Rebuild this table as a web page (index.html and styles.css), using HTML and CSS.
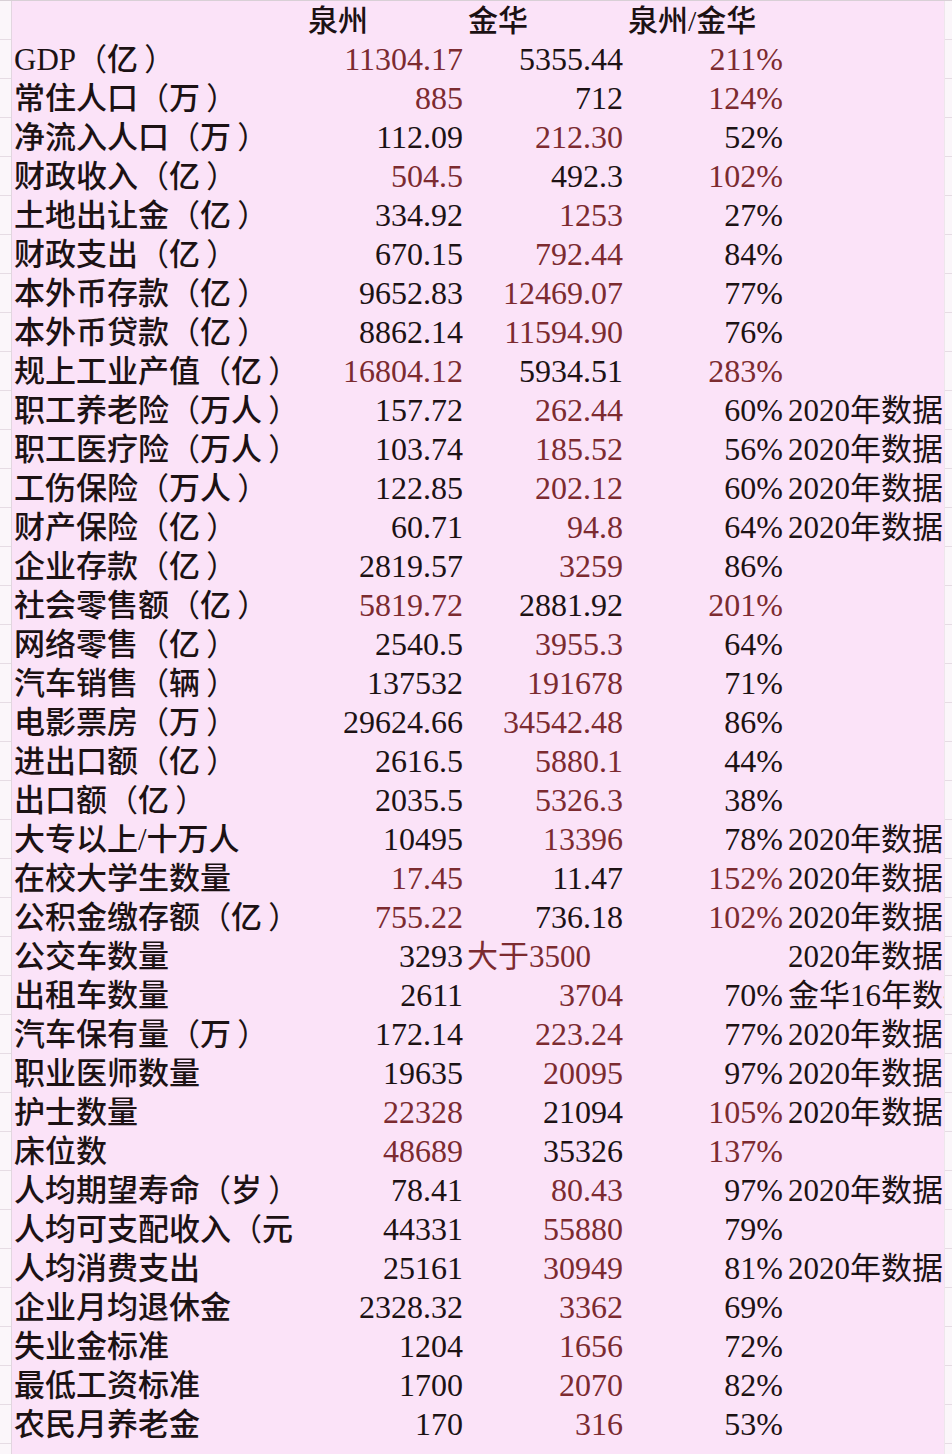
FILE: index.html
```html
<!DOCTYPE html>
<html lang="zh-CN">
<head>
<meta charset="utf-8">
<title>泉州 金华 对比</title>
<link rel="stylesheet" href="styles.css">
</head>
<body>
<div class="page">
  <div class="gutter"></div>
  <div class="sheet">
    <div class="row head"><div class="c a"></div><div class="c t">泉州</div><div class="c t">金华</div><div class="c t">泉州/金华</div><div class="c e"></div></div>
    <div class="row"><div class="c a">GDP<span class="po">（</span>亿<span class="pc">）</span></div><div class="c n r">11304.17</div><div class="c n">5355.44</div><div class="c n r">211%</div><div class="c e"></div></div>
    <div class="row"><div class="c a">常住人口<span class="po">（</span>万<span class="pc">）</span></div><div class="c n r">885</div><div class="c n">712</div><div class="c n r">124%</div><div class="c e"></div></div>
    <div class="row"><div class="c a">净流入人口<span class="po">（</span>万<span class="pc">）</span></div><div class="c n">112.09</div><div class="c n r">212.30</div><div class="c n">52%</div><div class="c e"></div></div>
    <div class="row"><div class="c a">财政收入<span class="po">（</span>亿<span class="pc">）</span></div><div class="c n r">504.5</div><div class="c n">492.3</div><div class="c n r">102%</div><div class="c e"></div></div>
    <div class="row"><div class="c a">土地出让金<span class="po">（</span>亿<span class="pc">）</span></div><div class="c n">334.92</div><div class="c n r">1253</div><div class="c n">27%</div><div class="c e"></div></div>
    <div class="row"><div class="c a">财政支出<span class="po">（</span>亿<span class="pc">）</span></div><div class="c n">670.15</div><div class="c n r">792.44</div><div class="c n">84%</div><div class="c e"></div></div>
    <div class="row"><div class="c a">本外币存款<span class="po">（</span>亿<span class="pc">）</span></div><div class="c n">9652.83</div><div class="c n r">12469.07</div><div class="c n">77%</div><div class="c e"></div></div>
    <div class="row"><div class="c a">本外币贷款<span class="po">（</span>亿<span class="pc">）</span></div><div class="c n">8862.14</div><div class="c n r">11594.90</div><div class="c n">76%</div><div class="c e"></div></div>
    <div class="row"><div class="c a">规上工业产值<span class="po">（</span>亿<span class="pc">）</span></div><div class="c n r">16804.12</div><div class="c n">5934.51</div><div class="c n r">283%</div><div class="c e"></div></div>
    <div class="row"><div class="c a">职工养老险<span class="po">（</span>万人<span class="pc">）</span></div><div class="c n">157.72</div><div class="c n r">262.44</div><div class="c n">60%</div><div class="c e">2020年数据</div></div>
    <div class="row"><div class="c a">职工医疗险<span class="po">（</span>万人<span class="pc">）</span></div><div class="c n">103.74</div><div class="c n r">185.52</div><div class="c n">56%</div><div class="c e">2020年数据</div></div>
    <div class="row"><div class="c a">工伤保险<span class="po">（</span>万人<span class="pc">）</span></div><div class="c n">122.85</div><div class="c n r">202.12</div><div class="c n">60%</div><div class="c e">2020年数据</div></div>
    <div class="row"><div class="c a">财产保险<span class="po">（</span>亿<span class="pc">）</span></div><div class="c n">60.71</div><div class="c n r">94.8</div><div class="c n">64%</div><div class="c e">2020年数据</div></div>
    <div class="row"><div class="c a">企业存款<span class="po">（</span>亿<span class="pc">）</span></div><div class="c n">2819.57</div><div class="c n r">3259</div><div class="c n">86%</div><div class="c e"></div></div>
    <div class="row"><div class="c a">社会零售额<span class="po">（</span>亿<span class="pc">）</span></div><div class="c n r">5819.72</div><div class="c n">2881.92</div><div class="c n r">201%</div><div class="c e"></div></div>
    <div class="row"><div class="c a">网络零售<span class="po">（</span>亿<span class="pc">）</span></div><div class="c n">2540.5</div><div class="c n r">3955.3</div><div class="c n">64%</div><div class="c e"></div></div>
    <div class="row"><div class="c a">汽车销售<span class="po">（</span>辆<span class="pc">）</span></div><div class="c n">137532</div><div class="c n r">191678</div><div class="c n">71%</div><div class="c e"></div></div>
    <div class="row"><div class="c a">电影票房<span class="po">（</span>万<span class="pc">）</span></div><div class="c n">29624.66</div><div class="c n r">34542.48</div><div class="c n">86%</div><div class="c e"></div></div>
    <div class="row"><div class="c a">进出口额<span class="po">（</span>亿<span class="pc">）</span></div><div class="c n">2616.5</div><div class="c n r">5880.1</div><div class="c n">44%</div><div class="c e"></div></div>
    <div class="row"><div class="c a">出口额<span class="po">（</span>亿<span class="pc">）</span></div><div class="c n">2035.5</div><div class="c n r">5326.3</div><div class="c n">38%</div><div class="c e"></div></div>
    <div class="row"><div class="c a">大专以上/十万人</div><div class="c n">10495</div><div class="c n r">13396</div><div class="c n">78%</div><div class="c e">2020年数据</div></div>
    <div class="row"><div class="c a">在校大学生数量</div><div class="c n r">17.45</div><div class="c n">11.47</div><div class="c n r">152%</div><div class="c e">2020年数据</div></div>
    <div class="row"><div class="c a">公积金缴存额<span class="po">（</span>亿<span class="pc">）</span></div><div class="c n r">755.22</div><div class="c n">736.18</div><div class="c n r">102%</div><div class="c e">2020年数据</div></div>
    <div class="row"><div class="c a">公交车数量</div><div class="c n">3293</div><div class="c tx r">大于3500</div><div class="c n"></div><div class="c e">2020年数据</div></div>
    <div class="row"><div class="c a">出租车数量</div><div class="c n">2611</div><div class="c n r">3704</div><div class="c n">70%</div><div class="c e">金华16年数据</div></div>
    <div class="row"><div class="c a">汽车保有量<span class="po">（</span>万<span class="pc">）</span></div><div class="c n">172.14</div><div class="c n r">223.24</div><div class="c n">77%</div><div class="c e">2020年数据</div></div>
    <div class="row"><div class="c a">职业医师数量</div><div class="c n">19635</div><div class="c n r">20095</div><div class="c n">97%</div><div class="c e">2020年数据</div></div>
    <div class="row"><div class="c a">护士数量</div><div class="c n r">22328</div><div class="c n">21094</div><div class="c n r">105%</div><div class="c e">2020年数据</div></div>
    <div class="row"><div class="c a">床位数</div><div class="c n r">48689</div><div class="c n">35326</div><div class="c n r">137%</div><div class="c e"></div></div>
    <div class="row"><div class="c a">人均期望寿命<span class="po">（</span>岁<span class="pc">）</span></div><div class="c n">78.41</div><div class="c n r">80.43</div><div class="c n">97%</div><div class="c e">2020年数据</div></div>
    <div class="row"><div class="c a">人均可支配收入<span class="po">（</span>元</div><div class="c n">44331</div><div class="c n r">55880</div><div class="c n">79%</div><div class="c e"></div></div>
    <div class="row"><div class="c a">人均消费支出</div><div class="c n">25161</div><div class="c n r">30949</div><div class="c n">81%</div><div class="c e">2020年数据</div></div>
    <div class="row"><div class="c a">企业月均退休金</div><div class="c n">2328.32</div><div class="c n r">3362</div><div class="c n">69%</div><div class="c e"></div></div>
    <div class="row"><div class="c a">失业金标准</div><div class="c n">1204</div><div class="c n r">1656</div><div class="c n">72%</div><div class="c e"></div></div>
    <div class="row"><div class="c a">最低工资标准</div><div class="c n">1700</div><div class="c n r">2070</div><div class="c n">82%</div><div class="c e"></div></div>
    <div class="row"><div class="c a">农民月养老金</div><div class="c n">170</div><div class="c n r">316</div><div class="c n">53%</div><div class="c e"></div></div>
  </div>
  <div class="gutter right"></div>
</div>
</body>
</html>
```

FILE: styles.css
```css
html, body {
  margin: 0;
  padding: 0;
  background: #fbf7fa;
}
.page {
  display: flex;
  width: 952px;
  height: 1454px;
  overflow: hidden;
  border-top: 1px solid #d8d0d6;
  box-sizing: border-box;
}
.gutter {
  width: 11px;
  flex: none;
  background-color: #fbf6fa;
  background-image: repeating-linear-gradient(to bottom, transparent 0, transparent 38px, #e6dce4 38px, #e6dce4 39px);
  border-right: 1px solid #e2d6e0;
}
.gutter.right {
  width: 7px;
  border-right: none;
  border-left: 1px solid #eee6ec;
}
.sheet {
  flex: 1;
  background: #fbe3f8;
  overflow: hidden;
  font-family: "Liberation Serif", "Noto Sans CJK SC", serif;
  color: #1c1214;
}
.row {
  display: grid;
  grid-template-columns: 293px 160px 160px 160px 160px;
  height: 39px;
  line-height: 39px;
}
.c {
  white-space: nowrap;
  overflow: visible;
  font-size: 32px;
}
.a {
  font-size: 31px;
  font-weight: 500;
  padding-left: 2px;
  overflow: hidden;
}
.po, .pc {
  display: inline-block;
  width: 1em;
  font-weight: 400;
  white-space: nowrap;
}
.pc {
  text-indent: 0.2em;
}
.t {
  font-size: 30px;
  font-weight: 500;
  padding-left: 3px;
}
.n {
  text-align: right;
  padding-right: 2px;
}
.tx {
  padding-left: 2px;
  font-size: 31px;
}
.e {
  padding-left: 3px;
  font-size: 31px;
}
.r {
  color: #7c2b30;
}
.head .c {
  line-height: 40px;
}
```
